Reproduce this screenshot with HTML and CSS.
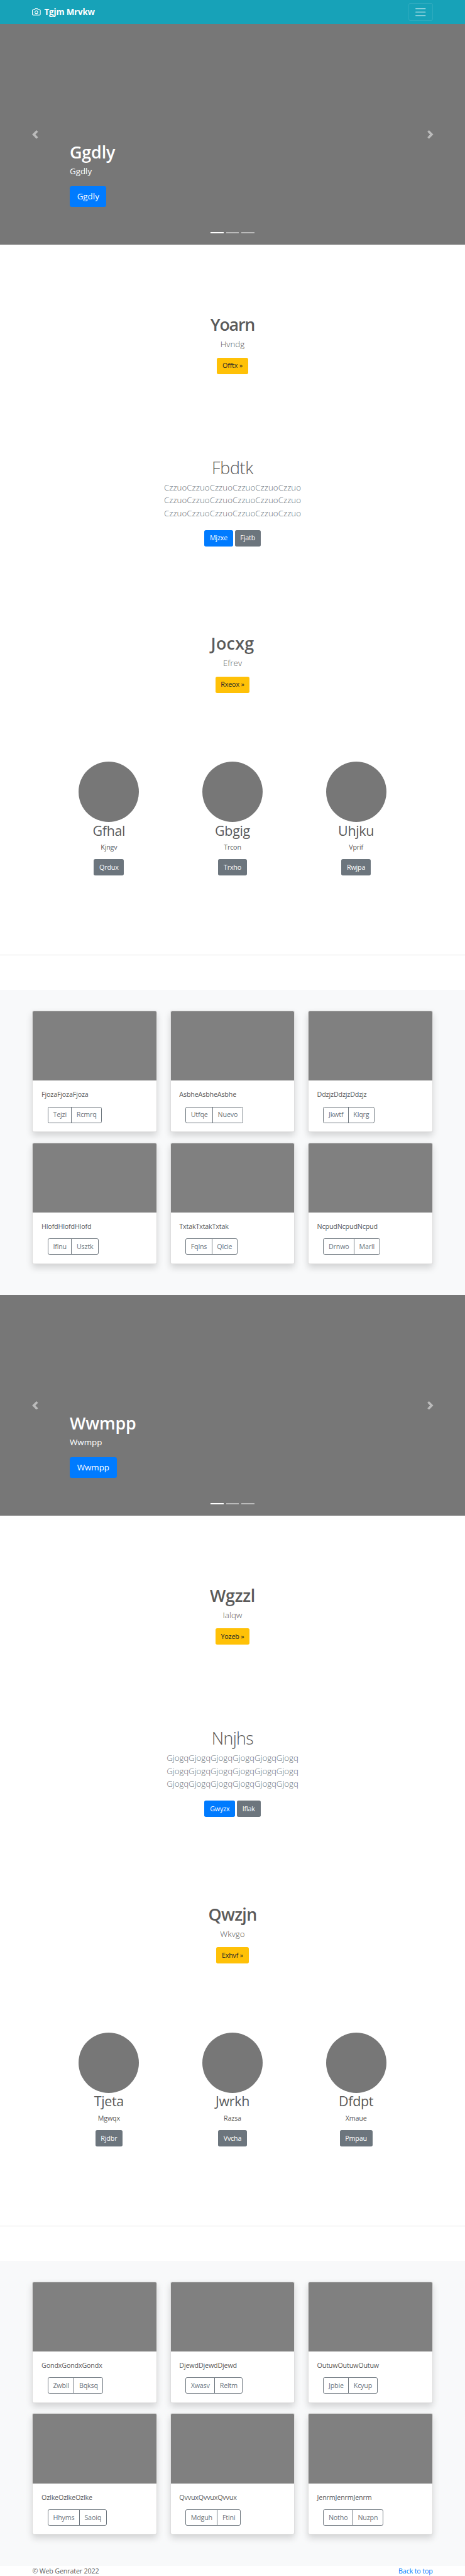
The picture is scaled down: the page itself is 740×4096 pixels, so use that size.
FILE: index.html
```html
<!DOCTYPE html>
<html lang="en">
<head>
<meta charset="utf-8">
<title>Tgjm Mrvkw</title>
<link rel="stylesheet" href="styles.css">
</head>
<body>
<header class="navbar">
  <a class="brand"><svg class="brand-icon" viewBox="0 0 24 24" fill="none" stroke="currentColor" stroke-width="1.9" stroke-linecap="round" stroke-linejoin="round"><path d="M23 19a2 2 0 0 1-2 2H3a2 2 0 0 1-2-2V8a2 2 0 0 1 2-2h4l2-3h6l2 3h4a2 2 0 0 1 2 2z"/><circle cx="12" cy="13" r="4"/></svg><strong>Tgjm Mrvkw</strong></a>
  <button class="toggler"><svg viewBox="0 0 30 30" stroke="rgba(255,255,255,.5)" stroke-width="2" stroke-linecap="round"><path d="M4 7h22M4 15h22M4 23h22"/></svg></button>
</header>

<main>
<section class="carousel">
  <svg class="arrow" viewBox="0 0 8 8"><path d="M5.25 0l-4 4 4 4 1.5-1.5L4.25 4l2.5-2.5L5.25 0z"/></svg>
  <div class="caption"><h1>Ggdly</h1><p>Ggdly</p><a class="btn btn-lg primary">Ggdly</a></div>
  <svg class="arrow" viewBox="0 0 8 8"><path d="M2.75 0l-1.5 1.5L3.75 4l-2.5 2.5L2.75 8l4-4-4-4z"/></svg>
  <div class="indicators"><i class="active"></i><i></i><i></i></div>
</section>

<section class="intro"><h2 class="bold tighter">Yoarn</h2><p class="lead">Hvndg</p><a class="btn warning">Offtx »</a></section>
<section class="intro pitch"><h2 class="light">Fbdtk</h2><p class="lead muted">CzzuoCzzuoCzzuoCzzuoCzzuoCzzuo<br>CzzuoCzzuoCzzuoCzzuoCzzuoCzzuo<br>CzzuoCzzuoCzzuoCzzuoCzzuoCzzuo</p><div class="actions"><a class="btn primary">Mjzxe</a><a class="btn secondary">Fjatb</a></div></section>
<section class="intro"><h2 class="bold loose">Jocxg</h2><p class="lead">Efrev</p><a class="btn warning">Rxeox »</a></section>

<section class="people">
  <div class="person"><div class="avatar"></div><h3>Gfhal</h3><p>Kjngv</p><a class="btn secondary">Qrdux</a></div>
  <div class="person"><div class="avatar"></div><h3>Gbgig</h3><p>Trcon</p><a class="btn secondary">Trxho</a></div>
  <div class="person"><div class="avatar"></div><h3>Uhjku</h3><p>Vprif</p><a class="btn secondary">Rwjpa</a></div>
</section>
<hr>
<section class="album">
  <article class="card"><div class="thumb"></div><div class="card-body"><p>FjozaFjozaFjoza</p><div class="group"><a>Tejzi</a><a>Rcmrq</a></div></div></article>
  <article class="card"><div class="thumb"></div><div class="card-body"><p>AsbheAsbheAsbhe</p><div class="group"><a>Utfqe</a><a>Nuevo</a></div></div></article>
  <article class="card"><div class="thumb"></div><div class="card-body"><p>DdzjzDdzjzDdzjz</p><div class="group"><a>Jkwtf</a><a>Klqrg</a></div></div></article>
  <article class="card"><div class="thumb"></div><div class="card-body"><p>HlofdHlofdHlofd</p><div class="group"><a>Iflnu</a><a>Usztk</a></div></div></article>
  <article class="card"><div class="thumb"></div><div class="card-body"><p>TxtakTxtakTxtak</p><div class="group"><a>Fqlns</a><a>Qlcie</a></div></div></article>
  <article class="card"><div class="thumb"></div><div class="card-body"><p>NcpudNcpudNcpud</p><div class="group"><a>Drnwo</a><a>Marll</a></div></div></article>
</section>

<section class="carousel">
  <svg class="arrow" viewBox="0 0 8 8"><path d="M5.25 0l-4 4 4 4 1.5-1.5L4.25 4l2.5-2.5L5.25 0z"/></svg>
  <div class="caption"><h1>Wwmpp</h1><p>Wwmpp</p><a class="btn btn-lg primary">Wwmpp</a></div>
  <svg class="arrow" viewBox="0 0 8 8"><path d="M2.75 0l-1.5 1.5L3.75 4l-2.5 2.5L2.75 8l4-4-4-4z"/></svg>
  <div class="indicators"><i class="active"></i><i></i><i></i></div>
</section>

<section class="intro"><h2 class="bold">Wgzzl</h2><p class="lead">Ialqw</p><a class="btn warning">Yozeb »</a></section>
<section class="intro pitch"><h2 class="light tight">Nnjhs</h2><p class="lead muted tight-lead">GjogqGjogqGjogqGjogqGjogqGjogq<br>GjogqGjogqGjogqGjogqGjogqGjogq<br>GjogqGjogqGjogqGjogqGjogqGjogq</p><div class="actions"><a class="btn primary">Gwyzx</a><a class="btn secondary">Iflak</a></div></section>
<section class="intro"><h2 class="bold tight">Qwzjn</h2><p class="lead">Wkvgo</p><a class="btn warning">Exhvf »</a></section>

<section class="people">
  <div class="person"><div class="avatar"></div><h3>Tjeta</h3><p>Mgwqx</p><a class="btn secondary">Rjdbr</a></div>
  <div class="person"><div class="avatar"></div><h3>Jwrkh</h3><p>Razsa</p><a class="btn secondary">Vvcha</a></div>
  <div class="person"><div class="avatar"></div><h3>Dfdpt</h3><p>Xmaue</p><a class="btn secondary">Pmpau</a></div>
</section>
<hr>
<section class="album">
  <article class="card"><div class="thumb"></div><div class="card-body"><p>GondxGondxGondx</p><div class="group"><a>Zwbll</a><a>Bqksq</a></div></div></article>
  <article class="card"><div class="thumb"></div><div class="card-body"><p>DjewdDjewdDjewd</p><div class="group"><a>Xwasv</a><a>Reltm</a></div></div></article>
  <article class="card"><div class="thumb"></div><div class="card-body"><p>OutuwOutuwOutuw</p><div class="group"><a>Jpbie</a><a>Kcyup</a></div></div></article>
  <article class="card"><div class="thumb"></div><div class="card-body"><p>OzlkeOzlkeOzlke</p><div class="group"><a>Hhyms</a><a>Saoiq</a></div></div></article>
  <article class="card"><div class="thumb"></div><div class="card-body"><p>QvvuxQvvuxQvvux</p><div class="group"><a>Mdguh</a><a>Ftini</a></div></div></article>
  <article class="card"><div class="thumb"></div><div class="card-body"><p>JenrmJenrmJenrm</p><div class="group"><a>Notho</a><a>Nuzpn</a></div></div></article>
</section>
</main>

<footer class="footer"><span>© Web Genrater 2022</span><a>Back to top</a></footer>
</body>
</html>
```
FILE: styles.css
```css
* { box-sizing: border-box; }
html { font-size: calc(740px * 16 / 1080); }
body {
  margin: 0;
  height: 4096px;
  overflow: hidden;
  font-family: "Open Sans", "Noto Sans", sans-serif;
  font-size: .98rem;
  letter-spacing: -.016em;
  line-height: 1.5rem;
  color: #5a5a5a;
  background: #fff;
}
h1, h2, h3, p { margin: 0; }

.navbar {
  height: 3.5rem;
  padding: 0 4.6875rem;
  display: flex;
  align-items: center;
  justify-content: space-between;
  background: #17a2b8;
}
.brand { display: flex; align-items: center; gap: .5rem; color: #fff; font-size: 1.22rem; }
.brand-icon { width: 1.25rem; height: 1.25rem; }
.toggler {
  width: 3.5rem;
  height: 2.5rem;
  padding: 0;
  display: flex;
  align-items: center;
  justify-content: center;
  background: none;
  border: 1px solid rgba(255, 255, 255, .1);
  border-radius: .25rem;
}
.toggler svg { width: 1.875rem; height: 1.875rem; }

.carousel {
  position: relative;
  height: 32rem;
  padding: 0 4.4375rem;
  display: flex;
  align-items: center;
  background: #777;
  color: #fff;
}
.arrow { width: 1.25rem; height: 1.25rem; flex: none; fill: #fff; opacity: .5; }
.caption { flex: 1; align-self: flex-end; padding: 0 4.4375rem 5.5rem; }
.caption h1 {
  padding-top: .125rem;
  font-size: 2.45rem;
  line-height: 2.875rem;
  font-weight: 600;
  letter-spacing: -.005em;
  margin-bottom: .5rem;
}
.caption p { font-size: 1.22rem; line-height: 1.75rem; letter-spacing: 0; margin-bottom: 1.25rem; }
.indicators {
  position: absolute;
  left: 0;
  right: 0;
  bottom: 1.625rem;
  display: flex;
  justify-content: center;
  gap: .375rem;
}
.indicators i { width: 1.875rem; height: .1875rem; background: #fff; opacity: .5; }
.indicators .active { opacity: 1; }

.btn {
  display: inline-flex;
  align-items: center;
  justify-content: center;
  height: 2.375rem;
  padding: 0 .8rem;
  border-radius: .25rem;
  white-space: pre;
}
.btn-lg { height: 3rem; padding: 0 1.0625rem; border-radius: .3rem; font-size: 1.22rem; letter-spacing: 0; }
.primary { background: #007bff; color: #fff; }
.secondary { background: #6c757d; color: #fff; }
.warning { background: #ffc107; color: #212529; }

.intro {
  display: flex;
  flex-direction: column;
  align-items: center;
  padding-top: 10rem;
  text-align: center;
}
.intro h2 {
  padding-top: .125rem;
  font-size: 2.45rem;
  line-height: 2.875rem;
  letter-spacing: -.01em;
  margin-bottom: .5rem;
}
.intro .bold { font-weight: 600; }
.intro .light { font-weight: 300; }
.intro .loose { letter-spacing: .01em; }
.intro .tight { letter-spacing: -.025em; }
.intro .tighter { letter-spacing: -.045em; }
.lead { font-size: 1.22rem; line-height: 1.875rem; font-weight: 300; letter-spacing: 0; margin-bottom: 1rem; }
.tight-lead { letter-spacing: -.007em; }
.muted { color: #6c757d; }
.pitch { padding: 12rem 0 2.5rem; }
.actions { display: flex; gap: .25rem; padding-top: .5rem; }

.people {
  display: grid;
  grid-template-columns: repeat(3, 17.9375rem);
  justify-content: center;
  padding: 10rem 0 11.475rem;
}
.person { display: flex; flex-direction: column; align-items: center; }
.avatar { width: 8.75rem; height: 8.75rem; border-radius: 50%; background: #777; }
.person h3 {
  padding-top: .125rem;
  font-size: 1.96rem;
  line-height: 2.275rem;
  font-weight: 400;
  letter-spacing: -.015em;
  margin-bottom: .5rem;
}
.person p { margin-bottom: 1rem; }
hr { margin: 0 0 5rem; height: 1px; border: 0; background: #e5e5e5; }

.album {
  display: grid;
  grid-template-columns: repeat(3, 1fr);
  column-gap: 1.875rem;
  row-gap: 1.5rem;
  padding: 3rem 4.6875rem 4.5rem;
  background: #f8f9fa;
}
.card {
  height: 17.625rem;
  overflow: hidden;
  background: #fff;
  border: 1px solid rgba(0, 0, 0, .125);
  border-radius: .25rem;
  box-shadow: 0 .5rem 1rem rgba(0, 0, 0, .15);
}
.thumb { height: 10.09rem; background: #808080; }
.card-body { padding: 1.25rem; }
.card-body p { margin-bottom: 1rem; }
.group { display: inline-flex; height: 2.375rem; margin-left: .9rem; color: #6c757d; border: 1px solid #6c757d; border-radius: .25rem; }
.group a { display: flex; align-items: center; padding: 0 .68rem; }
.group a + a { border-left: 1px solid #6c757d; }

.footer { display: flex; justify-content: space-between; padding: .04rem 4.6875rem 0; }
.footer a { color: #007bff; }
```
